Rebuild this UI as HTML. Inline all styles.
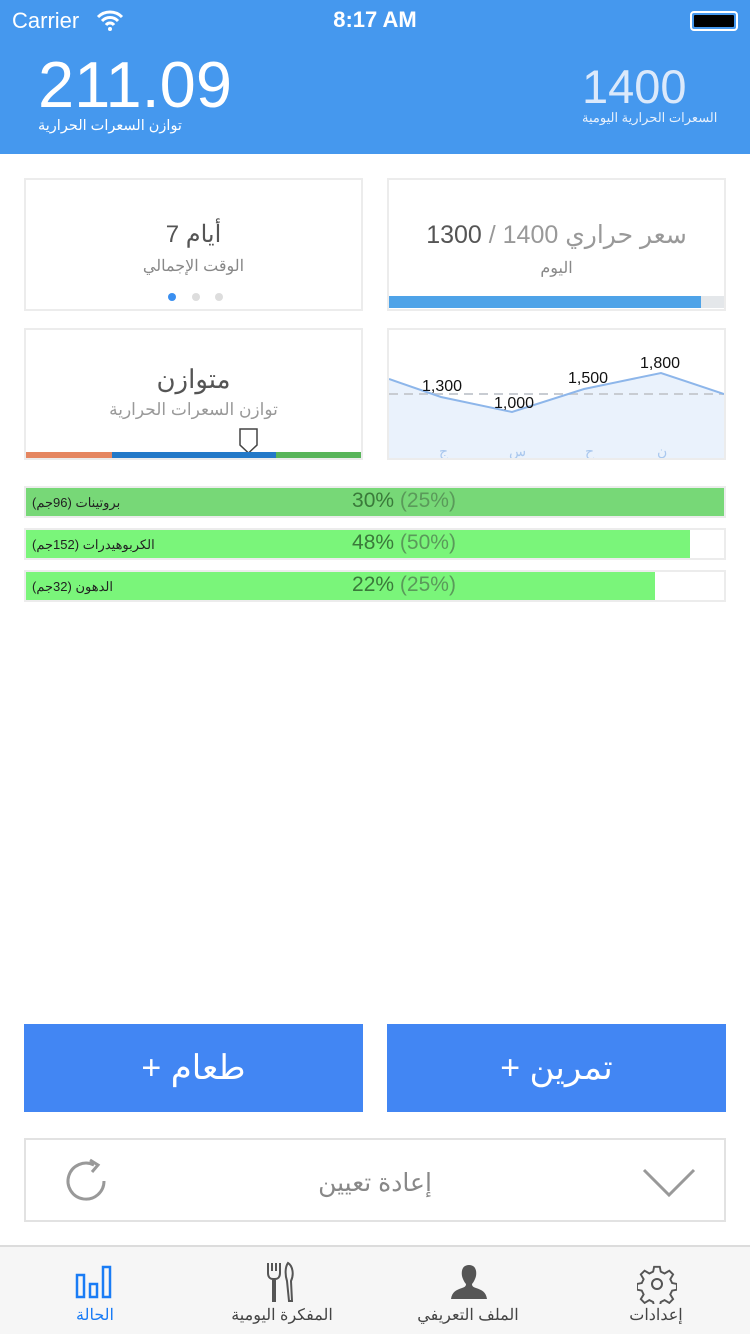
<!DOCTYPE html>
<html><head><meta charset="utf-8"><style>
*{margin:0;padding:0;box-sizing:border-box}
body{width:750px;height:1334px;background:#fff;font-family:"Liberation Sans","Noto Sans CJK SC",sans-serif;position:relative;overflow:hidden}
.a{position:absolute}
.hdr{left:0;top:0;width:750px;height:154px;background:#4598ee;color:#fff}
.card{position:absolute;border:2px solid #ececec;background:#fff;overflow:hidden}
.c{text-align:center;width:100%}
.bar{position:absolute;left:24px;width:702px;height:32px;border:2px solid #ececec}
.bar .f{position:absolute;left:0;top:0;bottom:0}
.bar .l{position:absolute;left:6px;top:7px;font-size:13px;color:#222}
.bar .p{position:absolute;left:318px;width:120px;text-align:center;top:1px;font-size:21px;color:#3a7a3a}
.bar .p span{color:#5a9a5a}
.btn{position:absolute;top:1024px;width:339px;height:88px;background:#4286f3;color:#fff;font-size:34px;text-align:center;line-height:88px}
.tab{position:absolute;top:1245px;left:0;width:750px;height:89px;background:#f6f6f6;border-top:2px solid #dcdcdc}
.ti{position:absolute;top:58px;width:190px;text-align:center;font-size:16px;color:#444}
</style></head><body>
<div class="a hdr">
 <div class="a" style="left:12px;top:8px;font-size:22px">Carrier</div>
 <svg class="a" style="left:96px;top:9px" width="28" height="22" viewBox="0 0 28 22"><path d="M2 8a17 17 0 0 1 24 0M6 12a11 11 0 0 1 16 0M10 16a5 5 0 0 1 8 0" stroke="#fff" stroke-width="3" fill="none"/><circle cx="14" cy="20" r="2" fill="#fff"/></svg>
 <div class="a c" style="top:7px;font-size:22px;font-weight:bold">8:17 AM</div>
 <div class="a" style="left:690px;top:11px;width:48px;height:20px;border:2px solid #fff;border-radius:4px;padding:2px"><div style="background:#000;width:100%;height:100%;border-radius:1px"></div></div>
 <div class="a" style="left:38px;top:50px;font-size:65px;line-height:70px">211.09</div>
 <div class="a" style="left:38px;top:118px;font-size:14.5px">توازن السعرات الحرارية</div>
 <div class="a" style="left:582px;top:62px;font-size:47px;line-height:50px;color:#dbe9fb">1400</div>
 <div class="a" style="left:582px;top:110px;font-size:13px;color:#e8f1fc">السعرات الحرارية اليومية</div>
</div>

<div class="card" style="left:24px;top:178px;width:339px;height:133px">
 <div class="a c" style="top:40px;font-size:24px;color:#555">أيام 7</div>
 <div class="a c" style="top:76px;font-size:16px;color:#888">الوقت الإجمالي</div>
 <div class="a" style="left:142px;top:113px;width:8px;height:8px;border-radius:4px;background:#3a8ff0"></div>
 <div class="a" style="left:166px;top:113px;width:8px;height:8px;border-radius:4px;background:#ddd"></div>
 <div class="a" style="left:189px;top:113px;width:8px;height:8px;border-radius:4px;background:#ddd"></div>
</div>
<div class="card" style="left:387px;top:178px;width:339px;height:133px">
 <div class="a c" style="top:40px;font-size:25px;color:#999"><span style="color:#555">1300</span> / 1400 سعر حراري</div>
 <div class="a c" style="top:78px;font-size:16px;color:#888">اليوم</div>
 <div class="a" style="left:0;top:116px;width:312px;height:12px;background:#4ea3e8"></div>
 <div class="a" style="left:312px;top:116px;width:25px;height:12px;background:#e4e7ea"></div>
</div>
<div class="card" style="left:24px;top:328px;width:339px;height:132px">
 <div class="a c" style="top:34px;font-size:26px;color:#555">متوازن</div>
 <div class="a c" style="top:70px;font-size:17px;color:#999">توازن السعرات الحرارية</div>
 <svg class="a" style="left:213px;top:98px" width="20" height="26" viewBox="0 0 20 26"><path d="M1 1h17v16l-8.5 8-8.5-8z" fill="#fff" stroke="#444" stroke-width="1.5"/></svg>
 <div class="a" style="left:0;top:122px;width:86px;height:6px;background:#e58660"></div>
 <div class="a" style="left:86px;top:122px;width:164px;height:6px;background:#2379c8"></div>
 <div class="a" style="left:250px;top:122px;width:87px;height:6px;background:#58b55a"></div>
</div>
<div class="card" style="left:387px;top:328px;width:339px;height:132px">
 <svg class="a" style="left:0;top:0" width="335" height="128" viewBox="0 0 335 128">
  <path d="M0 49L52 67L123 82L195 59L272 43L335 64V128H0Z" fill="#eaf2fc"/>
  <path d="M0 64H335" stroke="#c8ccd2" stroke-width="2" stroke-dasharray="9 6"/>
  <path d="M0 49L52 67L123 82L195 59L272 43L335 64" stroke="#8db6ea" stroke-width="2" fill="none"/>
  <g font-size="16" fill="#111" font-family="Liberation Sans"><text x="33" y="61">1,300</text><text x="105" y="78">1,000</text><text x="179" y="53">1,500</text><text x="251" y="38">1,800</text></g>
  <g font-size="14" fill="#aac8ee"><text x="50" y="126">ج</text><text x="120" y="126">س</text><text x="196" y="126">ح</text><text x="268" y="126">ن</text></g>
 </svg>
</div>

<div class="bar" style="top:486px"><div class="f" style="width:698px;background:#77d877"></div><div class="l" dir="ltr">(بروتينات (96جم</div><div class="p">30% <span>(25%)</span></div></div>
<div class="bar" style="top:528px"><div class="f" style="width:664px;background:#7af57a"></div><div class="l" dir="ltr">(الكربوهيدرات (152جم</div><div class="p">48% <span>(50%)</span></div></div>
<div class="bar" style="top:570px"><div class="f" style="width:629px;background:#7af57a"></div><div class="l" dir="ltr">(الدهون (32جم</div><div class="p">22% <span>(25%)</span></div></div>

<div class="btn" style="left:24px">+ طعام</div>
<div class="btn" style="left:387px">+ تمرين</div>

<div class="a" style="left:24px;top:1138px;width:702px;height:84px;border:2px solid #e2e2e2">
 <svg class="a" style="left:38px;top:18px" width="46" height="46" viewBox="0 0 46 46"><path d="M40 23A18 18 0 1 1 30 7" stroke="#999" stroke-width="3" fill="none"/><path d="M26 2L34 7L28 14" stroke="#999" stroke-width="3" fill="none"/></svg>
 <div class="a c" style="top:28px;font-size:25px;color:#888">إعادة تعيين</div>
 <svg class="a" style="left:616px;top:28px" width="54" height="30" viewBox="0 0 54 30"><path d="M2 2L27 27L52 2" stroke="#999" stroke-width="3" fill="none"/></svg>
</div>

<div class="tab">
 <svg class="a" style="left:75px;top:18px" width="38" height="34" viewBox="0 0 38 34"><g fill="none" stroke="#1a7cf5" stroke-width="2.5"><rect x="2" y="10" width="7" height="22"/><rect x="15" y="19" width="7" height="13"/><rect x="28" y="2" width="7" height="30"/></g></svg>
 <div class="ti" style="left:0;color:#1a7cf5">الحالة</div>
 <svg class="a" style="left:266px;top:14px" width="30" height="42" viewBox="0 0 30 42"><g fill="none" stroke="#555" stroke-width="2"><path d="M2 2v10c0 4 2 6 5 6v22h2V18c3 0 5-2 5-6V2M6 2v8M10 2v8"/><path d="M22 2c5 3 6 12 3 18l1 20h-3l-2-20c-2-6-2-14 1-18z"/></g></svg>
 <div class="ti" style="left:187px">المفكرة اليومية</div>
 <svg class="a" style="left:450px;top:16px" width="38" height="38" viewBox="0 0 38 38"><path d="M19 2c6 0 8 5 7 11-1 4-3 7-4 8 0 2 1 3 4 4 6 2 10 4 11 11H1c1-7 5-9 11-11 3-1 4-2 4-4-1-1-3-4-4-8-1-6 1-11 7-11z" fill="#555"/></svg>
 <div class="ti" style="left:373px">الملف التعريفي</div>
 <svg class="a" style="left:637px;top:17px" width="40" height="40" viewBox="0 0 40 40"><g fill="none" stroke="#555" stroke-width="2"><path d="M17 2h6l1 5 4 2 5-3 4 4-3 5 2 4 5 1v6l-5 1-2 4 3 5-4 4-5-3-4 2-1 5h-6l-1-5-4-2-5 3-4-4 3-5-2-4-5-1v-6l5-1 2-4-3-5 4-4 5 3 4-2z" transform="scale(0.95) translate(1 1)"/><circle cx="20" cy="20" r="5"/></g></svg>
 <div class="ti" style="left:561px">إعدادات</div>
</div>
</body></html>
